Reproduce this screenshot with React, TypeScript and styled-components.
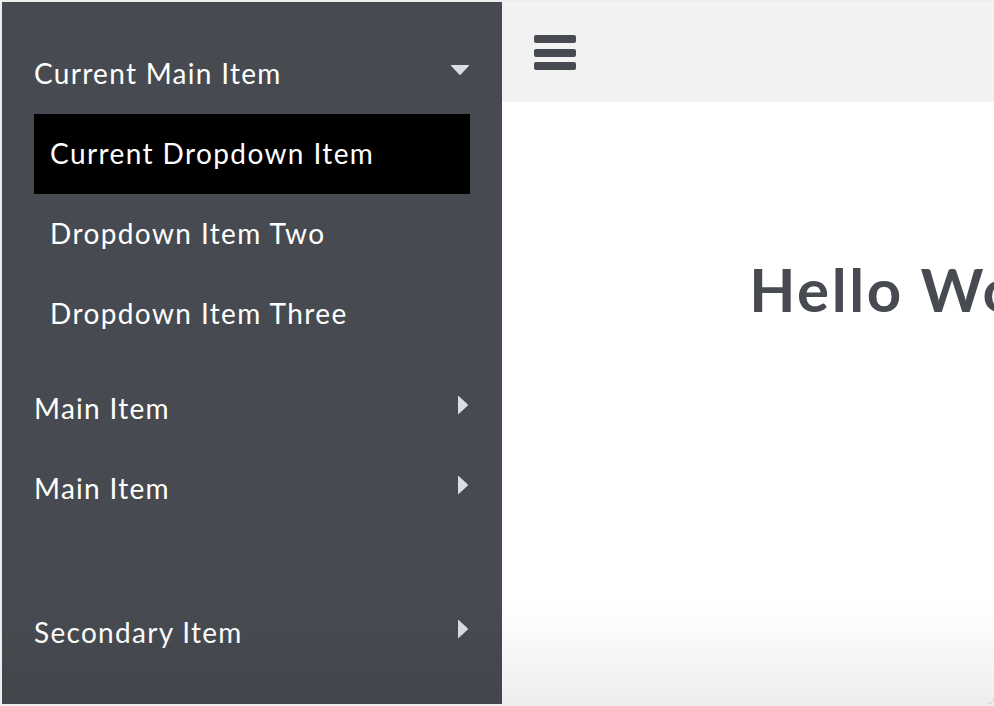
import React from "react";
import styled, { createGlobalStyle } from "styled-components";

const Global = createGlobalStyle`
  html, body { margin: 0; padding: 0; background: #eeeeee; }
  body { font-family: Lato, "Open Sans", "Liberation Sans", sans-serif; }
  * { box-sizing: border-box; }
`;

const Frame = styled.div`
  position: relative;
  margin: 2px 0 0 2px;
  width: 992px;
  height: 702px;
  display: flex;
  overflow: hidden;
  background: #ffffff;
  border-bottom-right-radius: 8px;
  box-shadow: 0 1px 0 #c9c9c9;
  &::after {
    content: "";
    position: absolute;
    left: 0;
    right: 0;
    bottom: 0;
    height: 100px;
    pointer-events: none;
    background: linear-gradient(to bottom, rgba(0, 0, 0, 0), rgba(0, 0, 0, 0.065));
  }
`;

const Sidebar = styled.nav`
  width: 500px;
  flex-shrink: 0;
  background: #474b51;
  display: flex;
  flex-direction: column;
  padding: 32px 32px 31px 32px;
`;

const MainRow = styled.div<{ $bottom?: boolean }>`
  height: 80px;
  display: flex;
  align-items: center;
  justify-content: space-between;
  color: #ffffff;
  font-size: 28px;
  letter-spacing: 1.3px;
  margin-top: ${(p) => (p.$bottom ? "auto" : "0")};
`;

const Dropdown = styled.div`
  display: flex;
  flex-direction: column;
  margin-bottom: 15px;
`;

const DropItem = styled.div<{ $active?: boolean }>`
  height: 80px;
  display: flex;
  align-items: center;
  padding-left: 16px;
  color: #ffffff;
  font-size: 28px;
  letter-spacing: 1.4px;
  background: ${(p) => (p.$active ? "#000000" : "transparent")};
`;

const Label = styled.span`
  margin-top: -3px;
`;

const DropLabel = styled.span`
  margin-top: -2px;
`;

const ArrowDown = styled.svg`
  width: 20px;
  height: 12px;
  margin-top: -9px;
`;

const ArrowRight = styled.svg`
  width: 12px;
  height: 20px;
  margin-right: 1px;
  margin-top: -9px;
`;

const Content = styled.main`
  width: 844px;
  flex-shrink: 0;
  display: flex;
  flex-direction: column;
`;

const TopBar = styled.header`
  height: 100px;
  background: #f2f2f2;
  display: flex;
  align-items: center;
  padding-left: 32px;
`;

const Burger = styled.button`
  border: 0;
  background: transparent;
  padding: 0;
  margin-top: 1px;
  width: 42px;
  display: flex;
  flex-direction: column;
  gap: 5.5px;
  cursor: pointer;
`;

const Bar = styled.span`
  display: block;
  height: 8px;
  width: 42px;
  border-radius: 2px;
  background: #474b51;
`;

const Heading = styled.h1`
  margin: 157px 0 0 0;
  text-align: center;
  font-size: 60px;
  font-weight: 700;
  letter-spacing: 2.6px;
  line-height: 1;
  color: #474b51;
  white-space: nowrap;
`;

const Down = () => (
  <ArrowDown viewBox="0 0 20 12">
    <path d="M1.5 1 H18.5 Q19.6 1 18.8 1.9 L10.8 10.6 Q10 11.4 9.2 10.6 L1.2 1.9 Q0.4 1 1.5 1 Z" fill="#dadde1" />
  </ArrowDown>
);

const Right = () => (
  <ArrowRight viewBox="0 0 12 20">
    <path d="M1 1.5 V18.5 Q1 19.6 1.9 18.8 L10.6 10.8 Q11.4 10 10.6 9.2 L1.9 1.2 Q1 0.4 1 1.5 Z" fill="#dadde1" />
  </ArrowRight>
);

export default function App() {
  return (
    <>
      <Global />
      <Frame>
        <Sidebar>
          <MainRow>
            <Label>Current Main Item</Label>
            <Down />
          </MainRow>
          <Dropdown>
            <DropItem $active>
              <DropLabel>Current Dropdown Item</DropLabel>
            </DropItem>
            <DropItem>
              <DropLabel>Dropdown Item Two</DropLabel>
            </DropItem>
            <DropItem>
              <DropLabel>Dropdown Item Three</DropLabel>
            </DropItem>
          </Dropdown>
          <MainRow>
            <Label>Main Item</Label>
            <Right />
          </MainRow>
          <MainRow>
            <Label>Main Item</Label>
            <Right />
          </MainRow>
          <MainRow $bottom>
            <Label>Secondary Item</Label>
            <Right />
          </MainRow>
        </Sidebar>
        <Content>
          <TopBar>
            <Burger aria-label="menu">
              <Bar />
              <Bar />
              <Bar />
            </Burger>
          </TopBar>
          <Heading>Hello World</Heading>
        </Content>
      </Frame>
    </>
  );
}
